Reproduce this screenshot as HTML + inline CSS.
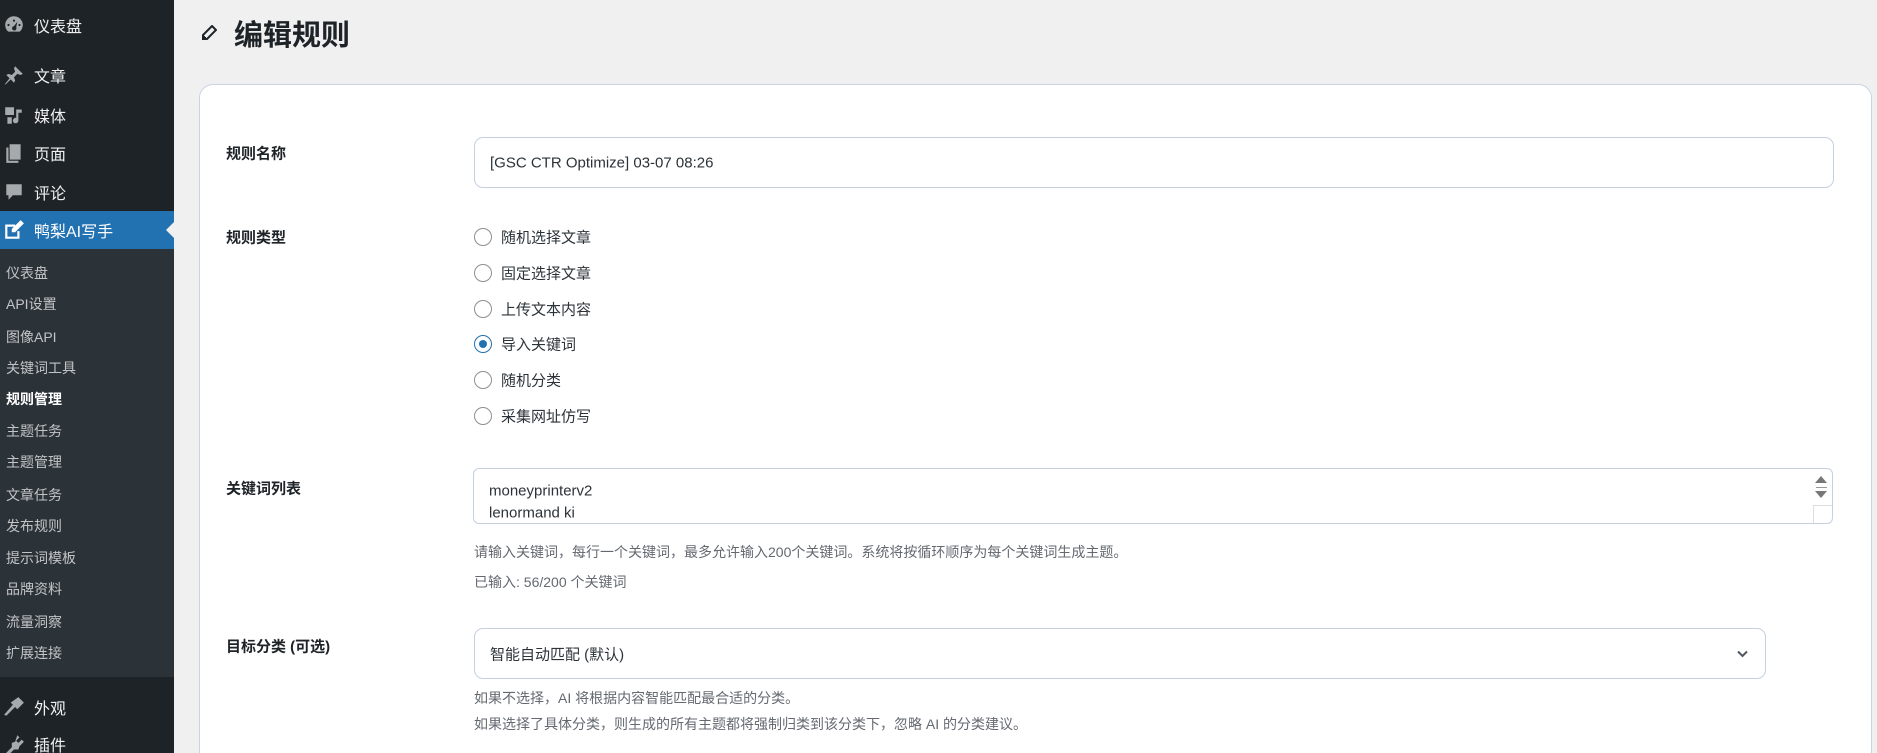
<!DOCTYPE html>
<html style="height:753px;overflow:hidden"><head><meta charset="utf-8"><style>
*{box-sizing:border-box;margin:0;padding:0}
body{width:1877px;height:753px;overflow:hidden;background:#f0f0f1;font-family:"Liberation Sans","Noto Sans CJK SC",sans-serif;position:relative;color:#1d2327}
.sb{position:absolute;left:0;top:0;width:174px;height:753px;background:#1d2327}
.sub{position:absolute;left:0;top:249px;width:174px;height:428px;background:#2c3338}
.act{position:absolute;left:0;top:211px;width:174px;height:38px;background:#2271b1}
.act:after{content:"";position:absolute;right:0;top:11px;border:8px solid transparent;border-right-color:#f0f0f1}
.t{position:absolute;left:34px;color:#f0f0f1;font-size:16px;transform:translateY(-50%)}
.s{position:absolute;left:6px;color:#c3c4c7;font-size:14px;transform:translateY(-50%)}
.ic{position:absolute;left:3px;width:22px;height:22px;transform:translateY(-50%);fill:#a7aaad}
.a{position:absolute;transform:translateY(-50%)}
.card{position:absolute;left:199px;top:84px;width:1673px;height:700px;background:#fff;border:1px solid #c9d4e2;border-radius:14px}
.lb{position:absolute;left:226px;font-size:15px;font-weight:bold;transform:translateY(-50%)}
.box{position:absolute;border:1px solid #c5d0df;border-radius:9px;background:#fff}
.r{position:absolute;left:474px;width:18px;height:18px;border:1px solid #8c8f94;border-radius:50%;transform:translateY(-50%)}
.rt{position:absolute;left:501px;font-size:15px;color:#2c3338;transform:translateY(-50%)}
.h{position:absolute;left:474px;font-size:14px;color:#646970;transform:translateY(-50%)}
</style></head><body>
<div class="sb"></div><div class="sub"></div><div class="act"></div>
<svg class="ic" style="top:25px" viewBox="0 0 20 20"><path d="M10 2a8 8 0 0 0-8 8c0 2.5 1 4.5 2.7 6h10.6A8 8 0 0 0 10 2zm0 3a1 1 0 1 1 0 2 1 1 0 0 1 0-2zM5 9a1 1 0 1 1 0 2 1 1 0 0 1 0-2zm10 0a1 1 0 1 1 0 2 1 1 0 0 1 0-2zm-5 2l3-4-1 5a2 2 0 1 1-2-1z"/></svg>
<div class="t" style="top:25px">仪表盘</div>
<svg class="ic" style="top:75px" viewBox="0 0 20 20"><path d="M11 2l7 7-2 1-3-1-3 3 1 3-1 2-3-3-5 5 0-1 4-5-3-3 2-1 3 1 3-3-1-3z"/></svg>
<div class="t" style="top:75px">文章</div>
<svg class="ic" style="top:115px" viewBox="0 0 20 20"><path d="M2 3h8v7H2zM12 5h5v3h-3v7a2.5 2.5 0 1 1-2-2.4zM4 12h4v6H4z"/></svg>
<div class="t" style="top:115px">媒体</div>
<svg class="ic" style="top:153px" viewBox="0 0 20 20"><path d="M6 2h10v14H6zM3 5h2v12h9v2H3z"/></svg>
<div class="t" style="top:153px">页面</div>
<svg class="ic" style="top:192px" viewBox="0 0 20 20"><path d="M3 3h14v10H9l-4 4v-4H3z"/></svg>
<div class="t" style="top:192px">评论</div>
<svg class="ic" style="top:230px;fill:#fff" viewBox="0 0 20 20"><path d="M2 5h9v2H4v9h9v-5h2v7H2zM16 1l3 3-8 8H8V9z"/></svg>
<div class="t" style="top:230px;color:#fff">鸭梨AI写手</div>
<div class="s" style="top:273px">仪表盘</div>
<div class="s" style="top:304px">API设置</div>
<div class="s" style="top:337px">图像API</div>
<div class="s" style="top:368px">关键词工具</div>
<div class="s" style="top:399px;color:#fff;font-weight:bold">规则管理</div>
<div class="s" style="top:431px">主题任务</div>
<div class="s" style="top:462px">主题管理</div>
<div class="s" style="top:495px">文章任务</div>
<div class="s" style="top:526px">发布规则</div>
<div class="s" style="top:558px">提示词模板</div>
<div class="s" style="top:589px">品牌资料</div>
<div class="s" style="top:622px">流量洞察</div>
<div class="s" style="top:653px">扩展连接</div>
<svg class="ic" style="top:707px" viewBox="0 0 20 20"><path d="M14 1l5 5-6 6-2-2-8 8-2-1 8-9-2-2z"/></svg>
<div class="t" style="top:707px">外观</div>
<svg class="ic" style="top:744px" viewBox="0 0 20 20"><path d="M13 2l2 2-3 3 2 2 3-3 2 2-4 4-1 3-4 0-5 5-2-2 5-5 0-4 3-1z"/></svg>
<div class="t" style="top:744px">插件</div>

<svg class="a" style="left:201px;top:33px;width:16px;height:16px" viewBox="0 0 16 16"><path d="M11 1l4 4-9 9H2v-4z M3 11v2h2" fill="none" stroke="#1d2327" stroke-width="2"/></svg>
<div class="a" style="left:234px;top:33px;font-size:29px;font-weight:bold">编辑规则</div>

<div class="card"></div>
<div class="lb" style="top:153px">规则名称</div>
<div class="box" style="left:474px;top:137px;width:1360px;height:51px"></div>
<div class="a" style="left:490px;top:163px;font-size:15px;color:#2c3338">[GSC CTR Optimize] 03-07 08:26</div>

<div class="lb" style="top:237px">规则类型</div>
<div class="r" style="top:237px"></div><div class="rt" style="top:237px">随机选择文章</div>
<div class="r" style="top:273px"></div><div class="rt" style="top:273px">固定选择文章</div>
<div class="r" style="top:309px"></div><div class="rt" style="top:309px">上传文本内容</div>
<div class="r" style="top:344px;border-color:#2271b1"><div style="position:absolute;left:4px;top:4px;width:8px;height:8px;border-radius:50%;background:#2271b1"></div></div><div class="rt" style="top:344px">导入关键词</div>
<div class="r" style="top:380px"></div><div class="rt" style="top:380px">随机分类</div>
<div class="r" style="top:416px"></div><div class="rt" style="top:416px">采集网址仿写</div>

<div class="lb" style="top:488px">关键词列表</div>
<div class="box" style="left:473px;top:468px;width:1360px;height:56px;border-radius:6px"></div>
<div class="a" style="left:489px;top:491px;font-size:15px;color:#2c3338">moneyprinterv2</div>
<div class="a" style="left:489px;top:513px;font-size:15px;color:#2c3338">lenormand ki</div>
<div class="a" style="left:1815px;top:476px;transform:none;width:0;height:0;border:6px solid transparent;border-bottom:7px solid #777;border-top:0"></div>
<div class="a" style="left:1816px;top:487px;transform:none;width:11px;height:1px;background:#999"></div>
<div class="a" style="left:1815px;top:491px;transform:none;width:0;height:0;border:6px solid transparent;border-top:7px solid #777;border-bottom:0"></div>
<div class="a" style="left:1813px;top:505px;transform:none;width:19px;height:18px;border-left:1px solid #ddd;border-top:1px solid #ddd"></div>
<div class="h" style="top:552px">请输入关键词，每行一个关键词，最多允许输入200个关键词。系统将按循环顺序为每个关键词生成主题。</div>
<div class="h" style="top:582px">已输入: 56/200 个关键词</div>

<div class="lb" style="top:646px">目标分类 (可选)</div>
<div class="box" style="left:474px;top:628px;width:1292px;height:51px"></div>
<div class="a" style="left:490px;top:654px;font-size:15px;color:#2c3338">智能自动匹配 (默认)</div>
<svg class="a" style="left:1736px;top:654px;width:13px;height:9px" viewBox="0 0 13 9"><path d="M2 2l4.5 4.5L11 2" fill="none" stroke="#50575e" stroke-width="2"/></svg>
<div class="h" style="top:698px">如果不选择，AI 将根据内容智能匹配最合适的分类。</div>
<div class="h" style="top:724px">如果选择了具体分类，则生成的所有主题都将强制归类到该分类下，忽略 AI 的分类建议。</div>
</body></html>
